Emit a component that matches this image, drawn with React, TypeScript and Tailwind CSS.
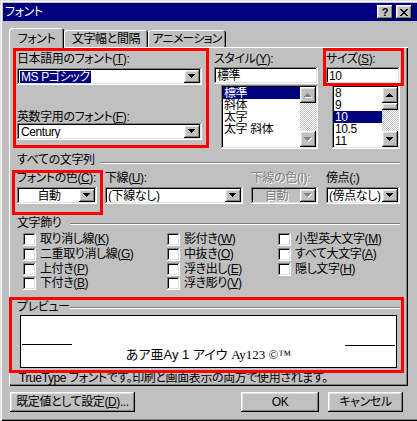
import React from 'react';

const raised =
  'shadow-[inset_-1px_-1px_#000,inset_1px_1px_#fff,inset_-2px_-2px_#808080,inset_2px_2px_#dfdfdf]';
const sunken =
  'shadow-[inset_-1px_-1px_#fff,inset_1px_1px_#808080,inset_-2px_-2px_#dfdfdf,inset_2px_2px_#000]';
const checker =
  'bg-[image:repeating-conic-gradient(#fff_0%_25%,#c0c0c0_0%_50%)] bg-[length:2px_2px]';
const dim = 'text-[#808080] [text-shadow:1px_1px_#fff]';

const DOWN = 'M0 0h7v1h-1v1h-1v1h-1v1h-1v-1h-1v-1h-1v-1h-1z';
const UP = 'M3 0h1v1h1v1h1v1h1v1h-7v-1h1v-1h1v-1h1z';

const Arrow: React.FC<{ up?: boolean; disabled?: boolean }> = ({ up, disabled }) => {
  const d = up ? UP : DOWN;
  return (
    <svg width="8" height="5" viewBox="0 0 8 5" shapeRendering="crispEdges">
      {disabled && <path d={d} fill="#fff" transform="translate(1 1)" />}
      <path d={d} fill={disabled ? '#808080' : '#000'} />
    </svg>
  );
};

const Label: React.FC<{ children: React.ReactNode; className?: string }> = ({ children, className = '' }) => (
  <div className={`h-[12px] whitespace-nowrap leading-[12px] ${className}`}>{children}</div>
);

const Combo: React.FC<{ className?: string; disabled?: boolean; children: React.ReactNode }> = ({
  className = '',
  disabled,
  children,
}) => (
  <div className={`flex h-[17px] p-[2px] ${sunken} ${disabled ? 'bg-[#c0c0c0]' : 'bg-white'} ${className}`}>
    <div className="flex min-w-0 flex-1 items-center overflow-hidden whitespace-nowrap leading-[12px]">{children}</div>
    <div className={`flex h-[13px] w-[16px] items-center justify-center bg-[#c0c0c0] ${raised}`}>
      <Arrow disabled={disabled} />
    </div>
  </div>
);

const ScrollBtn: React.FC<{ children: React.ReactNode }> = ({ children }) => (
  <div className={`flex h-[16px] w-[16px] items-center justify-center bg-[#c0c0c0] ${raised}`}>{children}</div>
);

const ScrollBar: React.FC<{ disabled?: boolean }> = ({ disabled }) => (
  <div className="flex w-[16px] flex-col">
    <ScrollBtn>
      <Arrow up disabled={disabled} />
    </ScrollBtn>
    {!disabled && <div className={`h-[7px] bg-[#c0c0c0] ${raised}`} />}
    <div className={`flex-1 ${checker}`} />
    <ScrollBtn>
      <Arrow disabled={disabled} />
    </ScrollBtn>
  </div>
);

const ListBox: React.FC<{ className?: string; items: string[]; selected: number; disabled?: boolean }> = ({
  className = '',
  items,
  selected,
  disabled,
}) => (
  <div className={`flex h-[64px] bg-white p-[2px] ${sunken} ${className}`}>
    <div className="min-w-0 flex-1 overflow-hidden">
      {items.map((it, i) => (
        <div
          key={it}
          className={`h-[12px] overflow-hidden whitespace-nowrap pl-[1px] leading-[12px] ${i === selected ? 'bg-[#000080] text-white' : ''}`}
        >
          {it}
        </div>
      ))}
    </div>
    <ScrollBar disabled={disabled} />
  </div>
);

const Check: React.FC<{ children: React.ReactNode }> = ({ children }) => (
  <div className="flex items-start">
    <div className={`h-[13px] w-[13px] shrink-0 bg-white ${sunken}`} />
    <Label className="ml-[4px]">{children}</Label>
  </div>
);

const Etch: React.FC<{ className?: string }> = ({ className = '' }) => (
  <div className={`h-[2px] flex-1 border-t border-b border-t-[#808080] border-b-white ${className}`} />
);

const Tab: React.FC<{ active?: boolean; className: string; children: React.ReactNode }> = ({ active, className, children }) => (
  <div
    className={`flex items-start justify-center rounded-t-[3px] bg-[#c0c0c0] shadow-[inset_1px_1px_#fff,inset_-1px_0_#000,inset_-2px_0_#808080] ${
      active ? 'relative z-10 -mb-[1px] h-[20px] pt-[5px]' : 'h-[17px] pt-[3px]'
    } ${className}`}
  >
    <Label>{children}</Label>
  </div>
);

export default function App() {
  return (
    <div className="relative h-[421px] w-[417px] overflow-hidden bg-[#c0c0c0] font-['Liberation_Sans','Noto_Sans_CJK_JP',sans-serif] text-[12px] tracking-[-0.4px] text-black [font-feature-settings:'palt'] shadow-[inset_1px_1px_#dfdfdf,inset_2px_2px_#fff,inset_0_-1px_#000,inset_0_-2px_#808080]">
      {/* title bar */}
      <div className="ml-[3px] mt-[3px] flex h-[18px] items-center bg-[#000080] pr-[5px]">
        <span className="ml-[2px] leading-[12px] text-white">フォント</span>
        <div className="ml-auto flex gap-[3px]">
          <div className={`flex h-[14px] w-[16px] items-center justify-center bg-[#c0c0c0] ${raised}`}>
            <span className="text-[11px] font-bold leading-[11px]">?</span>
          </div>
          <div className={`flex h-[14px] w-[16px] items-center justify-center bg-[#c0c0c0] ${raised}`}>
            <svg width="8" height="7" viewBox="0 0 8 7" shapeRendering="crispEdges">
              <path d="M0 0h2v1h1v1h2V1h1V0h2v1H7v1H6v1H5v1h1v1h1v1h1v1H6V6H5V5H3v1H2v1H0V6h1V5h1V4h1V3H2V2H1V1H0z" fill="#000" />
            </svg>
          </div>
        </div>
      </div>

      {/* tabs */}
      <div className="ml-[9px] mt-[7px] flex h-[19px] items-end">
        <Tab active className="w-[55px]">
          フォント
        </Tab>
        <Tab className="w-[84px]">文字幅と間隔</Tab>
        <Tab className="w-[78px] tracking-[-0.8px]">アニメーション</Tab>
      </div>

      {/* panel */}
      <div className="ml-[9px] flex h-[339px] w-[399px] flex-col px-[8px] pt-[6px] shadow-[inset_1px_1px_#fff,inset_-1px_-1px_#000,inset_-2px_-2px_#808080]">
        <div className="flex h-[96px]">
          <div className="w-[186px]">
            <Label>
              日本語用のフォント(<u>T</u>):
            </Label>
            <Combo className="mt-[3px]">
              <span className="ml-[1px] bg-[#000080] px-[1px] text-white">MS Pゴシック</span>
            </Combo>
            <Label className="mt-[26px]">
              英数字用のフォント(<u>F</u>):
            </Label>
            <Combo>
              <span className="ml-[2px]">Century</span>
            </Combo>
          </div>
          <div className="ml-[12px] w-[104px]">
            <Label>
              スタイル(<u>Y</u>):
            </Label>
            <div className={`mt-[2px] flex h-[17px] items-center bg-white pl-[3px] leading-[12px] ${sunken}`}>標準</div>
            <ListBox className="ml-[7px] mt-[1px] w-[97px]" items={['標準', '斜体', '太字', '太字 斜体']} selected={0} disabled />
          </div>
          <div className="ml-[8px] w-[74px]">
            <Label>
              サイズ(<u>S</u>):
            </Label>
            <div className={`mt-[2px] flex h-[17px] items-center bg-white pl-[3px] leading-[12px] ${sunken}`}>10</div>
            <ListBox className="ml-[6px] mt-[1px] w-[68px]" items={['8', '9', '10', '10.5', '11']} selected={2} />
          </div>
        </div>

        {/* すべての文字列 */}
        <div className="mt-[5px] flex items-start">
          <Label className="w-[83px]">すべての文字列</Label>
          <Etch className="mt-[8px]" />
        </div>
        <div className="mt-[6px] flex">
          <div className="w-[80px]">
            <Label>
              フォントの色(<u>C</u>):
            </Label>
            <Combo className="mt-[3px]">
              <span className="flex-1 text-center">自動</span>
            </Combo>
          </div>
          <div className="ml-[8px] w-[138px]">
            <Label>
              下線(<u>U</u>):
            </Label>
            <Combo className="mt-[3px]">
              <span className="ml-[1px]">(下線なし)</span>
            </Combo>
          </div>
          <div className="ml-[8px] w-[67px]">
            <Label className={dim}>下線の色(I):</Label>
            <Combo className="mt-[3px]" disabled>
              <span className={`flex-1 text-center ${dim}`}>自動</span>
            </Combo>
          </div>
          <div className="ml-[8px] w-[74px]">
            <Label>
              傍点(<u>;</u>)
            </Label>
            <Combo className="mt-[3px]">
              <span className="ml-[1px]">(傍点なし)</span>
            </Combo>
          </div>
        </div>

        {/* 文字飾り */}
        <div className="mt-[13px] flex items-start">
          <Label className="w-[53px]">文字飾り</Label>
          <Etch className="mt-[6px]" />
        </div>
        <div className="ml-[6px] mt-[4px] grid grid-cols-[144px_111px_1fr] grid-rows-[15px_15px_14px_14px]">
          <Check>
            取り消し線(<u>K</u>)
          </Check>
          <Check>
            影付き(<u>W</u>)
          </Check>
          <Check>
            小型英大文字(<u>M</u>)
          </Check>
          <Check>
            二重取り消し線(<u>G</u>)
          </Check>
          <Check>
            中抜き(<u>O</u>)
          </Check>
          <Check>
            すべて大文字(<u>A</u>)
          </Check>
          <Check>
            上付き(<u>P</u>)
          </Check>
          <Check>
            浮き出し(<u>E</u>)
          </Check>
          <Check>
            隠し文字(<u>H</u>)
          </Check>
          <Check>
            下付き(<u>B</u>)
          </Check>
          <Check>
            浮き彫り(<u>V</u>)
          </Check>
        </div>

        {/* プレビュー */}
        <div className="mt-[10px] flex items-start">
          <Label className="w-[53px]">プレビュー</Label>
          <Etch className="mt-[6px]" />
        </div>
        <div className="ml-[3px] mt-[2px] flex h-[53px] w-[377px] items-start border border-black bg-white">
          <div className="ml-[1px] mt-[28px] h-px w-[50px] bg-black" />
          <div className="mt-[32px] flex-1 whitespace-nowrap text-center text-[13px] leading-[14px] tracking-normal">
            あア亜Ay 1 アイウ <span className="font-['Liberation_Serif',serif]">Ay123 ©™</span>
          </div>
          <div className="mr-[1px] mt-[29px] h-px w-[50px] bg-black" />
        </div>
        <Label className="ml-[2px] mt-[4px]">TrueType フォントです。印刷と画面表示の両方で使用されます。</Label>
      </div>

      {/* buttons */}
      <div className="mt-[6px] flex h-[20px]">
        <div className={`ml-[10px] flex w-[125px] items-center justify-center leading-[12px] ${raised}`}>
          既定値として設定(<u>D</u>)...
        </div>
        <div className={`ml-[106px] flex w-[78px] items-center justify-center leading-[12px] ${raised}`}>OK</div>
        <div className={`ml-[9px] flex w-[75px] items-center justify-center leading-[12px] ${raised}`}>キャンセル</div>
      </div>

      {/* red annotation frames */}
      <div className="pointer-events-none absolute left-[13px] top-[48px] h-[100px] w-[196px] border-[3px] border-[#ff0000]" />
      <div className="pointer-events-none absolute left-[323px] top-[48px] h-[38px] w-[81px] border-[3px] border-[#ff0000]" />
      <div className="pointer-events-none absolute left-[12px] top-[170px] h-[45px] w-[91px] border-[3px] border-[#ff0000]" />
      <div className="pointer-events-none absolute left-[9px] top-[297px] h-[76px] w-[395px] border-[3px] border-[#ff0000]" />
    </div>
  );
}
